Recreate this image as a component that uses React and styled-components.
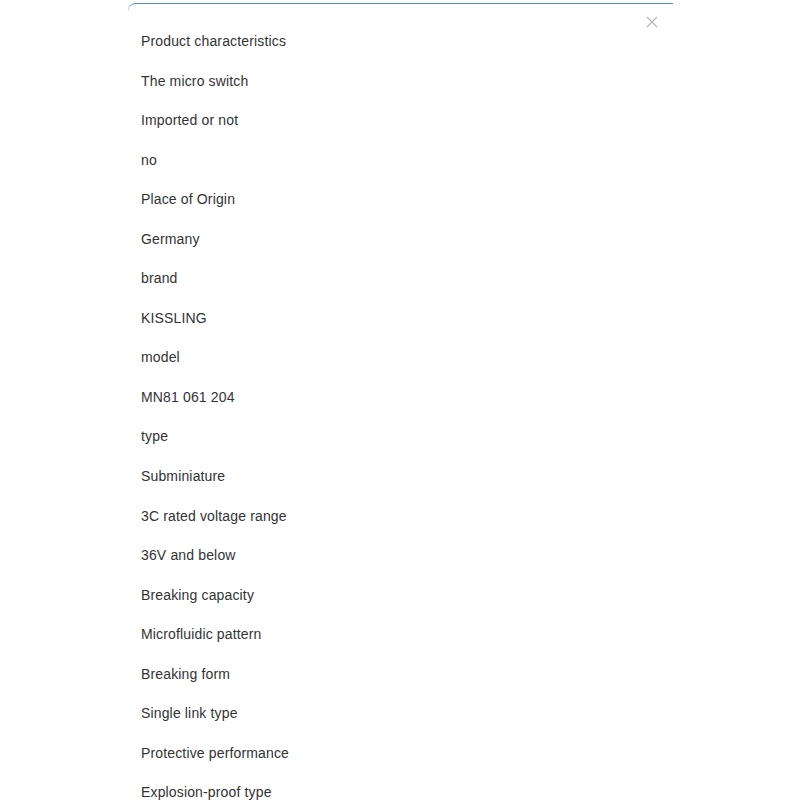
import styled, { createGlobalStyle } from "styled-components";

const rows = [
  "Product characteristics",
  "The micro switch",
  "Imported or not",
  "no",
  "Place of Origin",
  "Germany",
  "brand",
  "KISSLING",
  "model",
  "MN81 061 204",
  "type",
  "Subminiature",
  "3C rated voltage range",
  "36V and below",
  "Breaking capacity",
  "Microfluidic pattern",
  "Breaking form",
  "Single link type",
  "Protective performance",
  "Explosion-proof type",
];

const GlobalStyle = createGlobalStyle`
  body {
    margin: 0;
    background: #fff;
    font-family: Arial, "Liberation Sans", sans-serif;
  }
`;

const App = () => {
  return (
    <>
      <GlobalStyle />
      <Page>
        <Panel>
          <Close aria-label="close">
            <svg width="12" height="12" viewBox="0 0 12 12">
              <path d="M1 1L11 11M11 1L1 11" stroke="#b4b4b4" strokeWidth="1.2" fill="none" />
            </svg>
          </Close>
          <List>
            {rows.map((row, index) => (
              <Row key={index}>{row}</Row>
            ))}
          </List>
        </Panel>
      </Page>
    </>
  );
};

export default App;

const Page = styled.div`
  width: 800px;
  height: 800px;
  overflow: hidden;
  padding-top: 3px;
  padding-left: 128px;
  box-sizing: border-box;
`;

const Panel = styled.div`
  position: relative;
  width: 545px;
  border-top: 1px solid #4f8ad6;
  border-top-left-radius: 8px;
  padding: 29px 0 0 13px;
  box-sizing: border-box;
`;

const Close = styled.div`
  position: absolute;
  top: 12px;
  right: 15px;
  width: 12px;
  height: 12px;
  display: flex;
`;

const List = styled.div`
  display: flex;
  flex-direction: column;
  gap: 23.55px;
`;

const Row = styled.div`
  font-size: 14px;
  line-height: 16px;
  letter-spacing: 0.15px;
  color: #333;
`;
